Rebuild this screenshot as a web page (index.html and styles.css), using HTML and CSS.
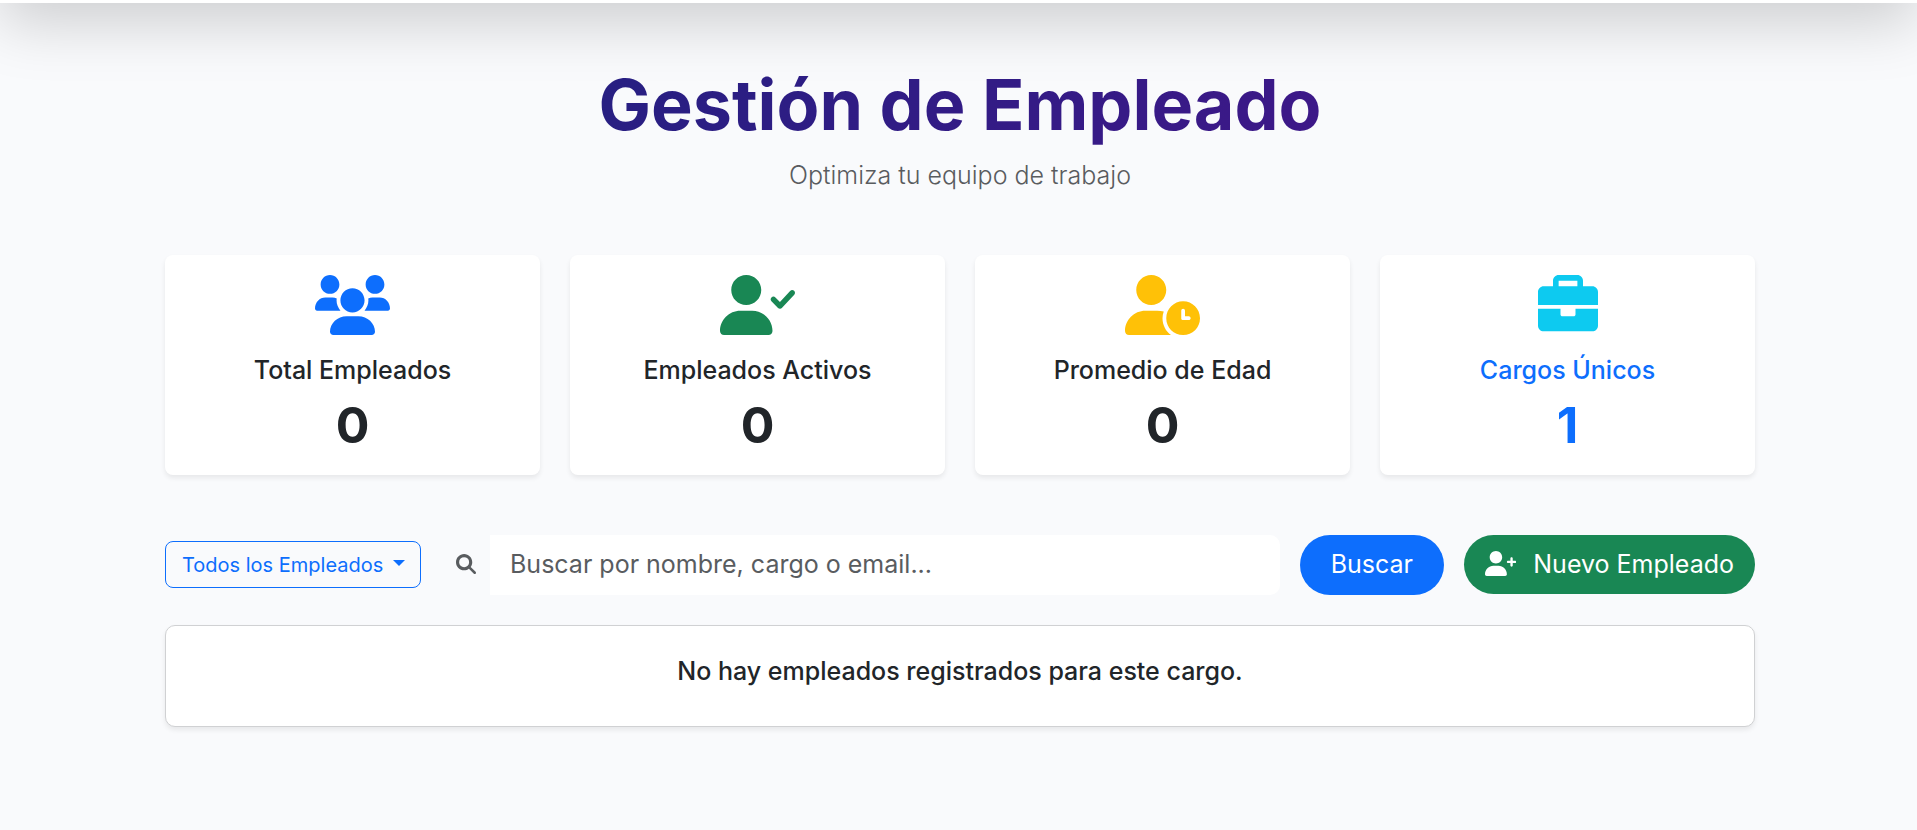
FILE: index.html
```html
<!DOCTYPE html>
<html lang="es">
<head>
  <meta charset="utf-8">
  <meta name="viewport" content="width=device-width, initial-scale=1">
  <title>Gestión de Empleado</title>
  <link rel="stylesheet" href="styles.css">
</head>
<body>
  <div class="topbar"></div>
  <main class="container">
    <header class="page-header">
      <h1 class="title">Gestión de Empleado</h1>
      <p class="subtitle">Optimiza tu equipo de trabajo</p>
    </header>

    <section class="stats">
      <article class="stat">
        <svg class="stat-icon blue" viewBox="0 0 640 512" aria-hidden="true"><path d="M319.9 320c57.41 0 103.1-46.56 103.1-104c0-57.44-46.54-104-103.1-104c-57.41 0-103.1 46.56-103.1 104C215.9 273.4 262.5 320 319.9 320zM369.9 352H270.1C191.6 352 128 411.7 128 485.3C128 500.1 140.7 512 156.4 512h327.2C499.3 512 512 500.1 512 485.3C512 411.7 448.4 352 369.9 352zM512 160c44.18 0 80-35.82 80-80S556.2 0 512 0c-44.18 0-80 35.82-80 80S467.8 160 512 160zM183.9 216c0-5.449 .9824-10.63 1.609-15.91C174.6 194.1 162.6 192 149.9 192H88.08C39.44 192 0 233.8 0 285.3C0 295.6 7.887 304 17.62 304h199.5C196.7 280.2 183.9 249.7 183.9 216zM128 160c44.18 0 80-35.82 80-80S172.2 0 128 0C83.82 0 48 35.82 48 80S83.82 160 128 160zM551.9 192h-61.84c-12.8 0-24.88 3.037-35.86 8.24C454.8 205.5 455.8 210.6 455.8 216c0 33.71-12.78 64.21-33.16 88h199.7C632.1 304 640 295.6 640 285.3C640 233.8 600.6 192 551.9 192z"/></svg>
        <h2 class="stat-label">Total Empleados</h2>
        <p class="stat-value">0</p>
      </article>
      <article class="stat">
        <svg class="stat-icon green" viewBox="0 0 640 512" aria-hidden="true"><path d="M274.7 304H173.3C77.61 304 0 381.6 0 477.3C0 496.5 15.52 512 34.66 512h378.7C432.5 512 448 496.5 448 477.3C448 381.6 370.4 304 274.7 304zM224 256c70.7 0 128-57.31 128-128S294.7 0 224 0C153.3 0 96 57.31 96 128S153.3 256 224 256zM632.3 134.4c-9.703-9-24.91-8.453-33.92 1.266l-87.05 93.75l-38.39-38.39c-9.375-9.375-24.56-9.375-33.94 0s-9.375 24.56 0 33.94l56 56C499.5 285.5 505.6 288 512 288h.4375c6.531-.125 12.72-2.891 17.16-7.672l104-112C642.6 158.6 642 143.4 632.3 134.4z"/></svg>
        <h2 class="stat-label">Empleados Activos</h2>
        <p class="stat-value">0</p>
      </article>
      <article class="stat">
        <svg class="stat-icon yellow" viewBox="0 0 640 512" aria-hidden="true"><path d="M496 224c-79.63 0-144 64.38-144 144s64.38 144 144 144s144-64.38 144-144S575.6 224 496 224zM544 384h-54.25C485.4 384 480 378.6 480 374.3V304c0-8.836 7.164-16 16-16s16 7.164 16 16v48h32c8.838 0 16 7.164 16 16S552.8 384 544 384zM320.1 368c0-19.6 3.8-38.4 10.6-55.6C312.8 306.9 294.1 304 274.7 304H173.3C77.61 304 0 381.6 0 477.3C0 496.5 15.52 512 34.66 512h357.5C348.3 479.5 320.1 426.7 320.1 368zM224 256c70.7 0 128-57.31 128-128S294.7 0 224 0C153.3 0 96 57.31 96 128S153.3 256 224 256z"/></svg>
        <h2 class="stat-label">Promedio de Edad</h2>
        <p class="stat-value">0</p>
      </article>
      <a class="stat stat-link" href="#cargos">
        <svg class="stat-icon cyan" viewBox="0 0 512 512" aria-hidden="true"><path d="M320 336c0 8.844-7.156 16-16 16h-96C199.2 352 192 344.8 192 336V288H0v144C0 457.6 22.41 480 48 480h416c25.59 0 48-22.41 48-48V288h-192V336zM464 96H384V48C384 22.41 361.6 0 336 0h-160C150.4 0 128 22.41 128 48V96H48C22.41 96 0 118.4 0 144V256h512V144C512 118.4 489.6 96 464 96zM336 96h-160V48h160V96z"/></svg>
        <h2 class="stat-label">Cargos Únicos</h2>
        <p class="stat-value">1</p>
      </a>
    </section>

    <div class="toolbar">
      <div class="filter">
        <select class="filter-select" aria-label="Filtrar por cargo">
          <option>Todos los Empleados</option>
        </select>
        <span class="caret"></span>
      </div>
      <form class="search">
        <div class="search-group">
          <label class="search-label" for="buscar" aria-label="Buscar empleados">
            <svg class="search-icon" viewBox="0 0 512 512" aria-hidden="true"><path d="M416 208c0 45.9-14.9 88.3-40 122.7L502.6 457.4c12.5 12.5 12.5 32.8 0 45.3s-32.8 12.5-45.3 0L330.7 376c-34.4 25.2-76.8 40-122.7 40C93.1 416 0 322.9 0 208S93.1 0 208 0S416 93.1 416 208zM208 336a128 128 0 1 0 0-256 128 128 0 1 0 0 256z"/></svg>
          </label>
          <input class="search-input" id="buscar" type="text" placeholder="Buscar por nombre, cargo o email...">
        </div>
        <button class="btn btn-primary" type="submit">Buscar</button>
      </form>
      <button class="btn btn-success" type="button">
        <svg class="btn-icon" viewBox="0 0 640 512" aria-hidden="true"><path d="M274.7 304H173.3C77.61 304 0 381.6 0 477.3C0 496.5 15.52 512 34.66 512h378.7C432.5 512 448 496.5 448 477.3C448 381.6 370.4 304 274.7 304zM224 256c70.7 0 128-57.31 128-128S294.7 0 224 0C153.3 0 96 57.31 96 128S153.3 256 224 256zM616 200h-48v-48C568 138.8 557.3 128 544 128s-24 10.75-24 24v48h-48C458.8 200 448 210.8 448 224s10.75 24 24 24h48v48C520 309.3 530.8 320 544 320s24-10.75 24-24v-48h48C629.3 248 640 237.3 640 224S629.3 200 616 200z"/></svg>
        Nuevo Empleado
      </button>
    </div>

    <section class="empty">
      <p class="empty-text">No hay empleados registrados para este cargo.</p>
    </section>
  </main>
</body>
</html>
```

FILE: styles.css
```css
* {
  box-sizing: border-box;
}

body {
  display: flow-root;
  margin: 0;
  min-height: 100vh;
  background: #f9fafc;
  color: #212529;
  font-family: Inter, "Liberation Sans", sans-serif;
  font-size: 25px;
  line-height: 30px;
}

h1,
h2,
p {
  margin: 0;
}

svg {
  display: block;
  fill: currentColor;
}

/* Only the lower edge of the bar and its shadow stay in view. */
.topbar {
  height: 100px;
  margin-top: -97px;
  background: #fff;
  box-shadow: 0 20px 60px rgba(0, 0, 0, 0.175);
}

.container {
  max-width: 1653px;
  margin: 0 auto;
  padding: 60px 30px 60px 33px;
  position: relative;
}

.page-header {
  margin-bottom: 62px;
  text-align: center;
}

.title {
  margin-bottom: 10px;
  font-size: 70px;
  font-weight: 700;
  line-height: 84px;
  color: transparent;
  background: linear-gradient(135deg, #1a237e, #4a148c);
  background-clip: text;
  -webkit-background-clip: text;
}

.subtitle {
  font-weight: 300;
  line-height: 36px;
  color: #595c5f;
}

.stats {
  display: grid;
  grid-template-columns: repeat(4, 1fr);
  gap: 30px;
  margin-bottom: 60px;
}

.stat {
  display: flex;
  flex-direction: column;
  align-items: center;
  padding: 20px;
  border-radius: 8px;
  background: #fff;
  box-shadow: 0 3px 5px rgba(0, 0, 0, 0.075);
}

.stat-link {
  color: #0d6efd;
  text-decoration: none;
}

.stat-icon {
  height: 60px;
  margin-bottom: 20px;
}

.blue {
  color: #0d6efd;
}

.green {
  color: #198754;
}

.yellow {
  color: #ffc107;
}

.cyan {
  color: #0dcaf0;
}

.stat-label {
  margin-bottom: 10px;
  font-size: 25px;
  font-weight: 500;
}

.stat-value {
  font-size: 50px;
  font-weight: 700;
  line-height: 60px;
}

.toolbar {
  display: flex;
  align-items: flex-start;
  gap: 20px;
  margin-bottom: 30px;
}

.filter {
  position: relative;
  margin-top: 6px;
}

.filter-select {
  display: block;
  height: 47px;
  padding: 0 36px 0 16px;
  border: 1px solid #0d6efd;
  border-radius: 8px;
  appearance: none;
  background: transparent;
  color: #0d6efd;
  font: 400 20px/30px Inter, "Liberation Sans", sans-serif;
}

.caret {
  position: absolute;
  top: 19px;
  right: 16px;
  border: 6px solid transparent;
  border-top-color: #0d6efd;
  border-bottom: 0;
  pointer-events: none;
}

.search {
  display: flex;
  flex: 1;
  gap: 20px;
}

.search-group {
  display: flex;
  flex: 1;
}

.search-label {
  display: flex;
  align-items: center;
  padding: 0 14px 2px 15px;
  color: #595c5f;
}

.search-icon {
  width: 20px;
  height: 20px;
}

.search-input {
  flex: 1;
  min-width: 0;
  height: 60px;
  padding: 0 20px 2px;
  border: 0;
  border-radius: 0 10px 10px 0;
  background: #fff;
  color: #212529;
  font: inherit;
}

.search-input::placeholder {
  color: #595c5f;
  opacity: 1;
}

.btn {
  display: flex;
  align-items: center;
  border: 0;
  border-radius: 30px;
  color: #fff;
  font: inherit;
  white-space: nowrap;
}

.btn-primary {
  height: 60px;
  padding: 0 31px 2px;
  background: #0d6efd;
}

.btn-success {
  gap: 17px;
  height: 59px;
  padding: 0 21px 2px;
  background: #198754;
}

.btn-icon {
  height: 25px;
}

.empty {
  padding: 30px 20px 40px;
  border: 1px solid #d0d1d3;
  border-radius: 10px;
  background: #fff;
  box-shadow: 0 3px 5px rgba(0, 0, 0, 0.075);
  text-align: center;
}

.empty-text {
  font-weight: 500;
}
```
